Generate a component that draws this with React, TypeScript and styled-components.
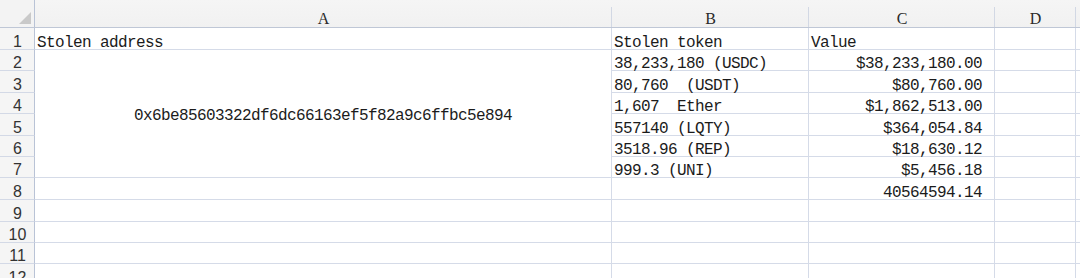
import React from "react";
import styled, { createGlobalStyle } from "styled-components";

const GlobalStyle = createGlobalStyle`
  html, body { margin: 0; padding: 0; background: #ffffff; overflow: hidden; }
  #root { width: 1080px; height: 278px; overflow: hidden; }
`;

const COLS = "35px 577px 197px 186px 81px 1fr";
const ROW_HEIGHTS = [22, 21, 22, 21, 22, 21, 21, 22, 22, 21, 21, 22];

const Sheet = styled.div`
  display: grid;
  grid-template-columns: ${COLS};
  grid-template-rows: 28px ${ROW_HEIGHTS.map((h) => h + "px").join(" ")};
  width: 1080px;
  font-family: "Liberation Mono", "Noto Sans CJK SC", monospace;
  color: #1b1b1b;
`;

const Corner = styled.div`
  position: relative;
  box-sizing: border-box;
  background: #f3f3f3;
  border-right: 1px solid #b9c3d6;
  border-bottom: 1px solid #bfc7d6;
  &::after {
    content: "";
    position: absolute;
    left: 19px;
    top: 12px;
    width: 0;
    height: 0;
    border-left: 12px solid transparent;
    border-bottom: 12px solid #c9c9c9;
  }
`;

const ColHead = styled.div`
  box-sizing: border-box;
  display: flex;
  align-items: flex-end;
  justify-content: center;
  font-family: "Liberation Serif", "Times New Roman", serif;
  line-height: 12px;
  padding-bottom: 2px;
  font-size: 16px;
  color: #2a2a2a;
  border-bottom: 1px solid #bfc7d6;
  background: linear-gradient(#d2d8e4, #d2d8e4) right 7px / 1px calc(100% - 7px) no-repeat,
    linear-gradient(#f5f5f5, #f1f1f1);
`;

const RowHead = styled.div`
  box-sizing: border-box;
  display: flex;
  align-items: flex-end;
  justify-content: center;
  font-family: "Liberation Sans", Arial, sans-serif;
  font-size: 16px;
  line-height: 12px;
  padding-bottom: 1px;
  padding-left: 1px;
  color: #333;
  background: #f5f5f5;
  border-right: 1px solid #b9c3d6;
  border-bottom: 1px solid #d3d9e6;
`;

const Cell = styled.div<{ $align?: "left" | "right" | "center" }>`
  box-sizing: border-box;
  display: flex;
  align-items: flex-end;
  justify-content: ${(p) =>
    p.$align === "right" ? "flex-end" : p.$align === "center" ? "center" : "flex-start"};
  padding: 0 ${(p) => (p.$align === "right" ? "12px" : "2px")} 0 2px;
  font-size: 16px;
  letter-spacing: -0.6px;
  line-height: 12px;
  white-space: pre;
  border-right: 1px solid #d5dbe8;
  border-bottom: 1px solid #d5dbe8;
  background: #ffffff;
`;

const Merged = styled(Cell)<{ $span: number }>`
  grid-row: span ${(p) => p.$span};
  align-items: center;
  justify-content: center;
  line-height: 20px;
  padding-top: 5px;
`;

type Row = { b: string; c: string };

const rows: Row[] = [
  { b: "38,233,180 (USDC)", c: "$38,233,180.00" },
  { b: "80,760  (USDT)", c: "$80,760.00" },
  { b: "1,607  Ether", c: "$1,862,513.00" },
  { b: "557140 (LQTY)", c: "$364,054.84" },
  { b: "3518.96 (REP)", c: "$18,630.12" },
  { b: "999.3 (UNI)", c: "$5,456.18" },
];

const headers = ["A", "B", "C", "D", ""];

export default function App() {
  return (
    <>
      <GlobalStyle />
      <Sheet>
        <Corner />
        {headers.map((h, i) => (
          <ColHead key={"h" + i}>{h}</ColHead>
        ))}

        <RowHead>1</RowHead>
        <Cell>Stolen address</Cell>
        <Cell>Stolen token</Cell>
        <Cell>Value</Cell>
        <Cell />
        <Cell />

        {rows.map((r, i) => (
          <React.Fragment key={"r" + i}>
            <RowHead style={{ gridColumn: 1, gridRow: i + 3 }}>{i + 2}</RowHead>
            {i === 0 && (
              <Merged $span={6} style={{ gridColumn: 2, gridRow: "3 / span 6" }}>
                0x6be85603322df6dc66163ef5f82a9c6ffbc5e894
              </Merged>
            )}
            <Cell style={{ gridColumn: 3, gridRow: i + 3 }}>{r.b}</Cell>
            <Cell $align="right" style={{ gridColumn: 4, gridRow: i + 3 }}>
              {r.c}
            </Cell>
            <Cell style={{ gridColumn: 5, gridRow: i + 3 }} />
            <Cell style={{ gridColumn: 6, gridRow: i + 3 }} />
          </React.Fragment>
        ))}

        <RowHead>8</RowHead>
        <Cell />
        <Cell />
        <Cell $align="right">40564594.14</Cell>
        <Cell />
        <Cell />

        {[9, 10, 11, 12].map((n) => (
          <React.Fragment key={"e" + n}>
            <RowHead>{n}</RowHead>
            <Cell />
            <Cell />
            <Cell />
            <Cell />
            <Cell />
          </React.Fragment>
        ))}
      </Sheet>
    </>
  );
}
